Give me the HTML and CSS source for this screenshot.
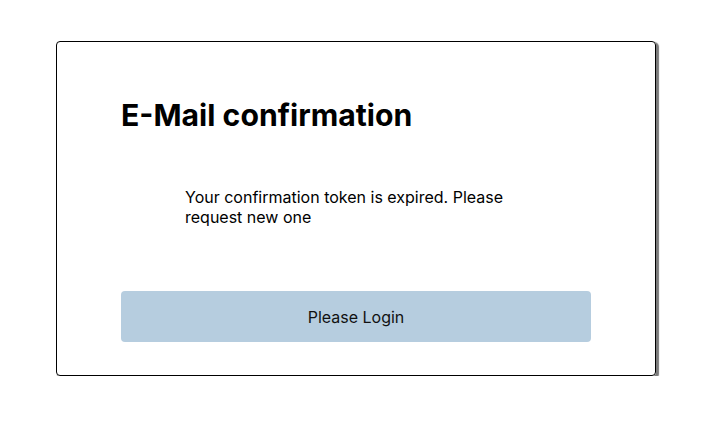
FILE: index.html
```html
<!DOCTYPE html>
<html>
<head>
<meta charset="utf-8">
<link rel="stylesheet" href="styles.css">
</head>
<body>
<div class="card">
  <h1 class="title">E-Mail confirmation</h1>
  <p class="message">Your confirmation token is expired. Please request new one</p>
  <button class="login-btn">Please Login</button>
</div>
</body>
</html>
```
FILE: styles.css
```css
html, body {
  margin: 0;
  padding: 0;
  background: #fff;
}
body {
  font-family: Inter, "Noto Sans", sans-serif;
  color: #000;
  padding: 41px 0 0 56px;
}
.card {
  box-sizing: border-box;
  width: 600px;
  height: 335px;
  border: 1px solid #000;
  border-radius: 4px;
  box-shadow: 2px 2px 1px 1px #7a7a7a;
  padding: 54px 64px 33px;
  display: flex;
  flex-direction: column;
}
.title {
  margin: 0;
  font-size: 30.2px;
  font-weight: 700;
  line-height: 39px;
}
.message {
  margin: 52px 64px 0;
  font-size: 16px;
  line-height: 20px;
}
.login-btn {
  margin-top: auto;
  height: 51px;
  border: none;
  border-radius: 4px;
  background: #b6cddf;
  font-family: Inter, "Noto Sans", sans-serif;
  font-size: 16px;
  color: #111;
}
```
